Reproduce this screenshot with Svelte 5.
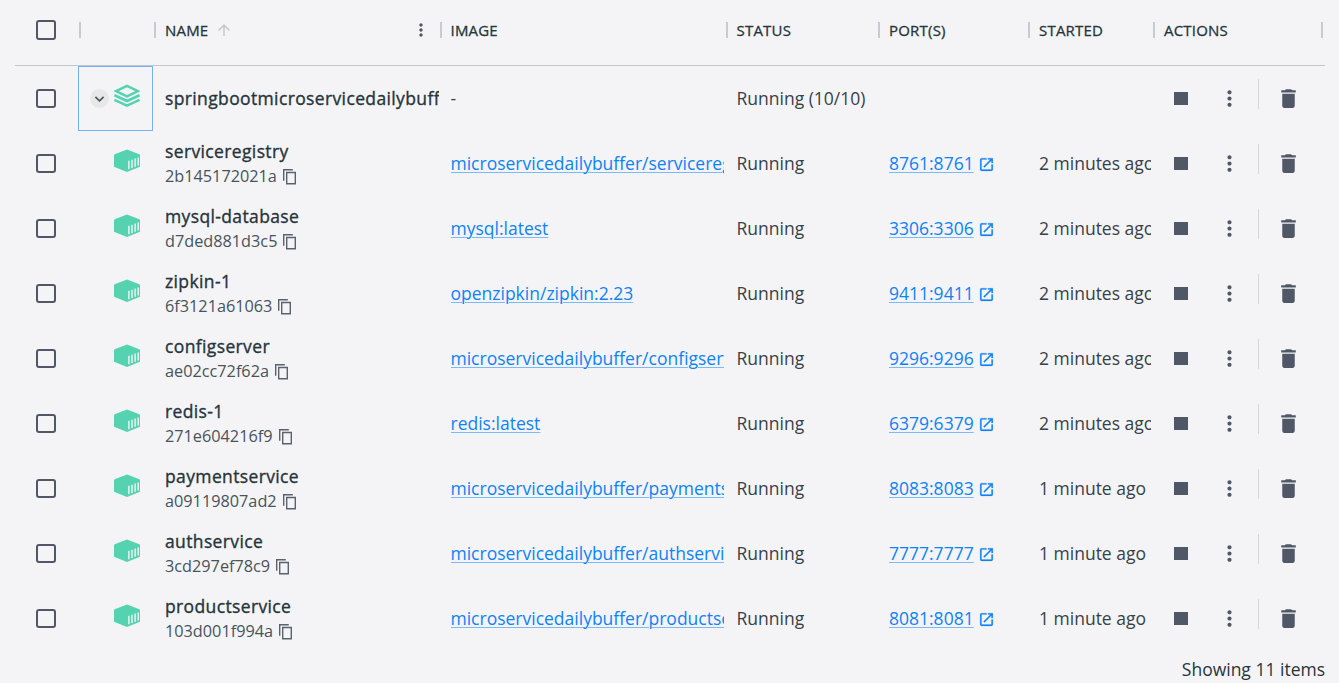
<script>
  const rows = [
    { name: 'springbootmicroservicedailybuffer', group: true, image: '-', status: 'Running (10/10)' },
    { name: 'serviceregistry', id: '2b145172021a', image: 'microservicedailybuffer/serviceregistry', port: '8761:8761', started: '2 minutes ago' },
    { name: 'mysql-database', id: 'd7ded881d3c5', image: 'mysql:latest', port: '3306:3306', started: '2 minutes ago' },
    { name: 'zipkin-1', id: '6f3121a61063', image: 'openzipkin/zipkin:2.23', port: '9411:9411', started: '2 minutes ago' },
    { name: 'configserver', id: 'ae02cc72f62a', image: 'microservicedailybuffer/configserver', port: '9296:9296', started: '2 minutes ago' },
    { name: 'redis-1', id: '271e604216f9', image: 'redis:latest', port: '6379:6379', started: '2 minutes ago' },
    { name: 'paymentservice', id: 'a09119807ad2', image: 'microservicedailybuffer/paymentservice', port: '8083:8083', started: '1 minute ago' },
    { name: 'authservice', id: '3cd297ef78c9', image: 'microservicedailybuffer/authservice', port: '7777:7777', started: '1 minute ago' },
    { name: 'productservice', id: '103d001f994a', image: 'microservicedailybuffer/productservice', port: '8081:8081', started: '1 minute ago' }
  ];
</script>

{#snippet dots(size)}
  <svg class="dots" width={size} height={size} viewBox="0 0 24 24"><path d="M12 8c1.1 0 2-.9 2-2s-.9-2-2-2-2 .9-2 2 .9 2 2 2zm0 2c-1.1 0-2 .9-2 2s.9 2 2 2 2-.9 2-2-.9-2-2-2zm0 6c-1.1 0-2 .9-2 2s.9 2 2 2 2-.9 2-2-.9-2-2-2z" /></svg>
{/snippet}

<main>
  <div class="grid head">
    <div class="cell check"><span class="box tall"></span></div>
    <div class="cell sep"></div>
    <div class="cell sep">
      <span>NAME</span>
      <svg class="arrow" width="18" height="18" viewBox="0 0 24 24"><path d="M4 12l1.41 1.41L11 7.83V20h2V7.83l5.58 5.59L20 12l-8-8-8 8z" /></svg>
      <span class="menu">{@render dots(20)}</span>
    </div>
    <div class="cell sep">IMAGE</div>
    <div class="cell sep">STATUS</div>
    <div class="cell sep">PORT(S)</div>
    <div class="cell sep">STARTED</div>
    <div class="cell sep last">ACTIONS</div>
  </div>

  {#each rows as r}
    <div class="grid row">
      <div class="cell check"><span class="box"></span></div>
      <div class="cell kind" class:focus={r.group}>
        {#if r.group}
          <span class="toggle"><svg width="19" height="19" viewBox="0 0 19 19"><path d="M5.4 7.9l4.1 4 4.1-4" fill="none" stroke="#4b5563" stroke-width="1.7" /></svg></span>
          <svg class="type" width="26" height="24" viewBox="0 0 26 24" fill="none" stroke="#55d3b1" stroke-width="2.5">
            <path d="M2 7.1L13 1.9l11 5.2-11 5.2z" />
            <path d="M.4 11.2L13 17l12.6-5.8M.4 15.8L13 21.6l12.6-5.8" />
          </svg>
        {:else}
          <svg class="type" width="26" height="24" viewBox="0 0 26 24">
            <path d="M13 .5L25.3 5.3q.7.3.7 1v11.5L13 23 0 17.8V6.3q0-.7.7-1z" fill="#55d3b1" />
            <path d="M14.9 11.8v8.5M18 10.7V19M21.1 9.6v8.2M24.2 8.5v8.1" stroke="#f4f4f6" stroke-width="1.4" />
          </svg>
        {/if}
      </div>
      <div class="cell name">
        <div class="title">{r.name}</div>
        {#if r.id}
          <div class="id"><span>{r.id}</span><svg width="16" height="17" viewBox="0 0 16 17" fill="none" stroke="#5a6270" stroke-width="1.4"><path d="M1.7 12.7V1.7h9.1M4.7 4.5h8.6v11.3H4.7z" /></svg></div>
        {/if}
      </div>
      <div class="cell">
        <div class="clip">{#if r.group}{r.image}{:else}<a href="#image">{r.image}</a>{/if}</div>
      </div>
      <div class="cell status">{r.status ?? 'Running'}</div>
      <div class="cell">
        {#if r.port}
          <a href="#port">{r.port}</a>
          <svg class="open" width="17" height="17" viewBox="0 0 24 24"><path d="M19 19H5V5h7V3H5c-1.11 0-2 .9-2 2v14c0 1.1.89 2 2 2h14c1.1 0 2-.9 2-2v-7h-2v7zM14 3v2h3.59l-9.83 9.83 1.41 1.41L19 6.41V10h2V3h-7z" /></svg>
        {/if}
      </div>
      <div class="cell"><div class="clip">{r.started ?? ''}</div></div>
      <div class="cell actions">
        <span class="stop"></span>
        {@render dots(25)}
        <span class="divider"></span>
        <svg class="trash" width="25" height="25" viewBox="0 0 24 24"><path d="M6 19c0 1.1.9 2 2 2h8c1.1 0 2-.9 2-2V7.5H6V19zM19 4h-3.5l-1-1h-5l-1 1H5v2.2h14V4z" /></svg>
      </div>
    </div>
  {/each}

  <footer>Showing 11 items</footer>
</main>

<style>
  :global(body) {
    background: #f4f4f6;
    overflow: hidden;
  }
  main {
    box-sizing: border-box;
    height: 683px;
    padding: 0 14px 0 15px;
    overflow: hidden;
    background: #f4f4f6;
    color: #36424a;
    font: 17.5px/25px 'Open Sans', sans-serif;
  }
  svg {
    display: block;
    flex: none;
  }
  .grid {
    display: grid;
    grid-template-columns: 63px 75px 285.5px 286px 152.5px 150px 125px 173px;
    height: 65px;
  }
  .cell {
    display: flex;
    align-items: center;
    box-sizing: border-box;
    min-width: 0;
    padding-left: 12px;
    white-space: nowrap;
  }
  .head {
    border-bottom: 1px solid #c4c6cc;
    color: #27343b;
    font-size: 15px;
    font-weight: 500;
    letter-spacing: 0.2px;
    -webkit-text-stroke: 0.3px currentColor;
  }
  .head .cell {
    height: 60px;
  }
  .cell.sep {
    padding-left: 1px;
  }
  .sep::before {
    content: '';
    width: 2px;
    height: 16px;
    margin-right: 9px;
    background: #c5cad3;
  }
  .last::after {
    content: '';
    width: 2px;
    height: 16px;
    margin: 0 2px 0 auto;
    background: #c5cad3;
  }
  .cell.check {
    padding-left: 21px;
  }
  .box {
    box-sizing: border-box;
    width: 20px;
    height: 19px;
    border: 2px solid #505867;
    border-radius: 3px;
  }
  .box.tall {
    height: 20px;
  }
  .arrow {
    margin-left: 7px;
    fill: #c4c6cc;
  }
  .dots {
    fill: #505867;
  }
  .menu {
    margin: 0 8px 0 auto;
  }
  .cell.kind {
    align-items: flex-start;
    padding: 18px 12px 0 36px;
  }
  .cell.focus {
    padding: 17px 11px 0 11px;
    border: 1px solid #74b2f8;
  }
  .toggle {
    width: 19px;
    height: 19px;
    margin: 5px 5px 0 0;
    border-radius: 50%;
    background: #e7e7e8;
  }
  .name {
    flex-direction: column;
    align-items: stretch;
    justify-content: center;
  }
  .title {
    overflow: hidden;
    color: #27343b;
    font-weight: 500;
    letter-spacing: 0.37px;
    -webkit-text-stroke: 0.35px currentColor;
  }
  .id {
    display: flex;
    align-items: center;
    gap: 5px;
    height: 25px;
    font-size: 16.25px;
    line-height: 24px;
    color: #48535b;
  }
  .id span {
    height: 25px;
  }
  .clip {
    flex: 1;
    min-width: 0;
    margin-right: 1px;
    overflow: hidden;
  }
  a {
    color: #0f83f5;
    text-decoration: underline;
    text-decoration-color: #7ab9fa;
    text-decoration-thickness: 1px;
    text-underline-offset: 2px;
  }
  .open {
    margin: 2px 0 0 4.5px;
    fill: #0f83f5;
    stroke: #0f83f5;
    stroke-width: 0.3;
  }
  .actions {
    padding-left: 22px;
  }
  .stop {
    width: 14px;
    height: 13px;
    margin-right: 28.5px;
    background: #505867;
  }
  .divider {
    width: 1px;
    height: 30px;
    margin: 0 17px 9px 16.5px;
    background: #d5d7db;
  }
  .trash {
    fill: #505867;
  }
  footer {
    padding-top: 6px;
    color: #27343b;
    text-align: right;
  }
</style>
